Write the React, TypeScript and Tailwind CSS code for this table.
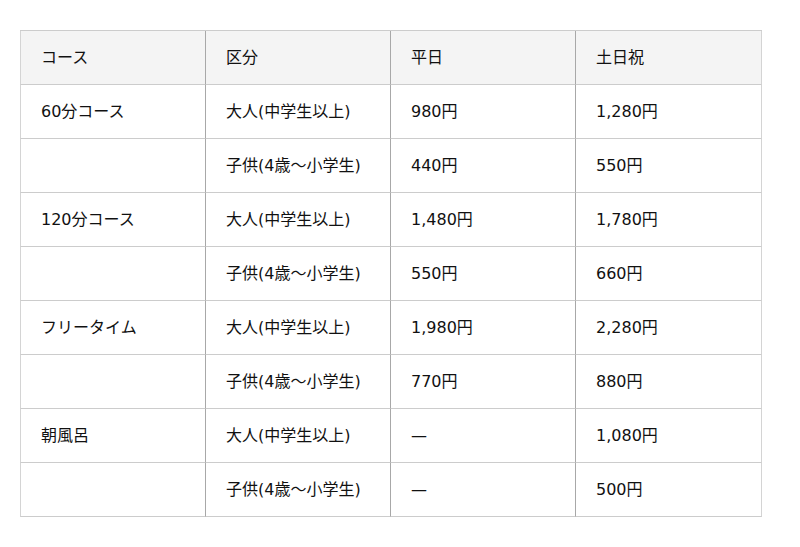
import React from "react";

const rows: [string, string, string, string][] = [
  ["60分コース", "大人(中学生以上)", "980円", "1,280円"],
  ["", "子供(4歳〜小学生)", "440円", "550円"],
  ["120分コース", "大人(中学生以上)", "1,480円", "1,780円"],
  ["", "子供(4歳〜小学生)", "550円", "660円"],
  ["フリータイム", "大人(中学生以上)", "1,980円", "2,280円"],
  ["", "子供(4歳〜小学生)", "770円", "880円"],
  ["朝風呂", "大人(中学生以上)", "—", "1,080円"],
  ["", "子供(4歳〜小学生)", "—", "500円"],
];

const headers = ["コース", "区分", "平日", "土日祝"];

function Cell({ text, col, header }: { text: string; col: number; header?: boolean }) {
  const left = col === 0 ? "border-l-[#d4d4d4]" : "border-l-[#a8a8a8]";
  const right = col === 3 ? "border-r border-r-[#d4d4d4]" : "";
  return (
    <div
      className={`h-[54px] flex items-center pl-[20px] border-l border-b border-b-[#cccccc] ${left} ${right} ${
        header ? "bg-[#f4f4f4]" : "bg-white"
      }`}
    >
      <span className="text-[16px] leading-[20px] text-[#111]">{text}</span>
    </div>
  );
}

export default function App() {
  return (
    <div
      className="w-[800px] h-[547px] bg-white pt-[30px] pl-[20px]"
      style={{ fontFamily: '"DejaVu Sans", "Noto Sans CJK JP", sans-serif' }}
    >
      <div className="w-[742px] grid grid-cols-[185px_185px_185px_187px] border-t border-t-[#cccccc]">
        {headers.map((h, i) => (
          <Cell key={h} text={h} col={i} header />
        ))}
        {rows.map((r, ri) =>
          r.map((t, ci) => <Cell key={`${ri}-${ci}`} text={t} col={ci} />)
        )}
      </div>
    </div>
  );
}
